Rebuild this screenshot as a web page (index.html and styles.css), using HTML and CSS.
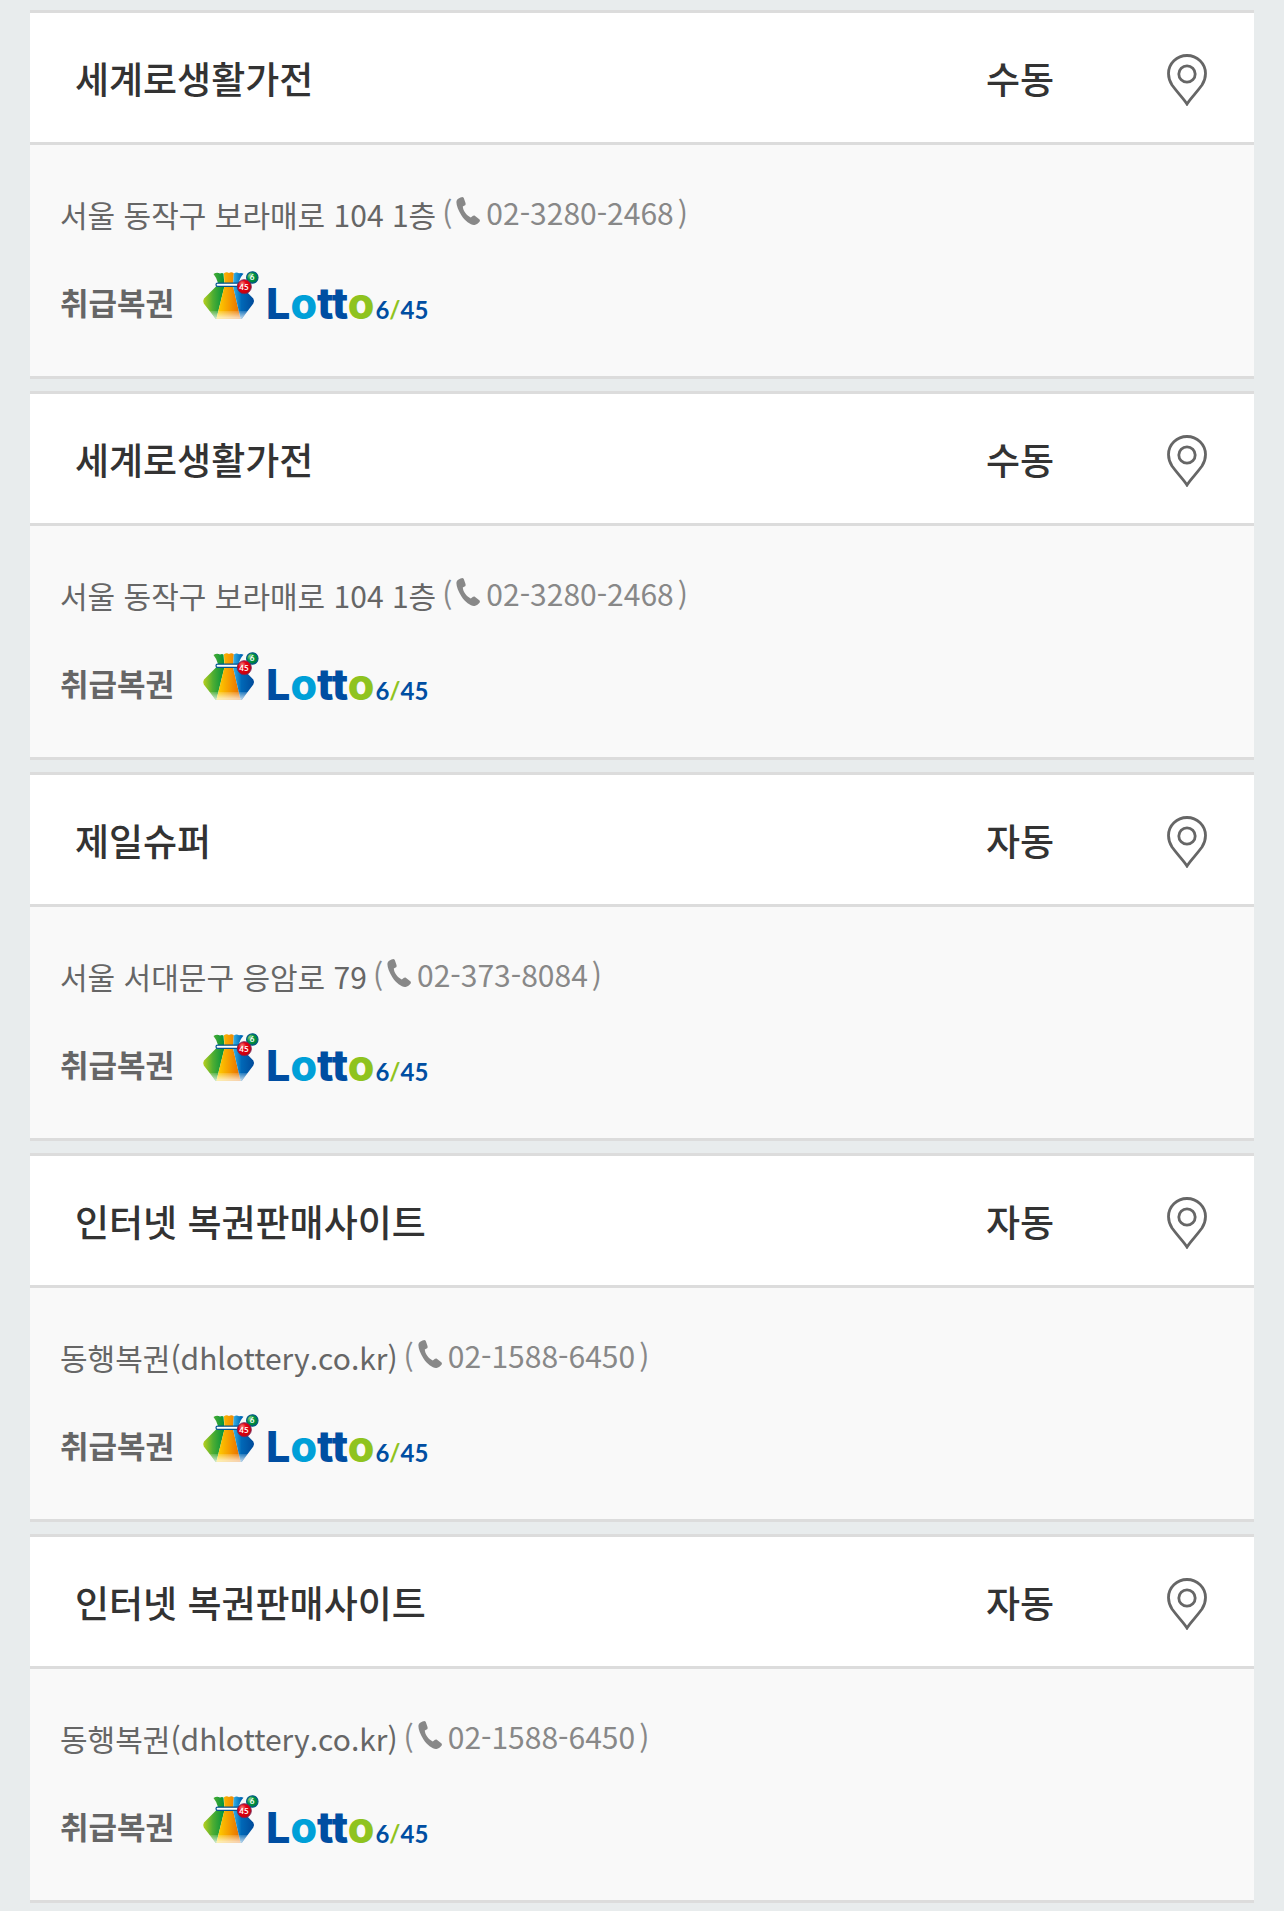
FILE: index.html
```
<!DOCTYPE html>
<html lang="ko">
<head>
  <meta charset="UTF-8">
  <meta name="viewport" content="width=device-width, initial-scale=1.0">
  <title>판매점</title>
  <link rel="stylesheet" href="styles.css">
</head>
<body>
  <!-- shared icons -->
  <svg class="sprite" aria-hidden="true">
    <defs>
      <linearGradient id="bagGreen" x1="0" x2="1">
        <stop offset="0" stop-color="#b9cf1d"/>
        <stop offset="0.45" stop-color="#4fae32"/>
        <stop offset="1" stop-color="#00923c"/>
      </linearGradient>
      <linearGradient id="bagOrange" x1="0" x2="1">
        <stop offset="0" stop-color="#ffd500"/>
        <stop offset="0.55" stop-color="#f59a00"/>
        <stop offset="1" stop-color="#e66b00"/>
      </linearGradient>
      <linearGradient id="bagBlue" x1="0" x2="1">
        <stop offset="0" stop-color="#35b4e8"/>
        <stop offset="0.4" stop-color="#0068b7"/>
        <stop offset="1" stop-color="#004a9a"/>
      </linearGradient>
      <linearGradient id="bagShine" x1="0" y1="0" x2="0" y2="1">
        <stop offset="0" stop-color="#fff" stop-opacity="0.15"/>
        <stop offset="1" stop-color="#fff" stop-opacity="0.75"/>
      </linearGradient>
      <radialGradient id="ballRed" cx="0.35" cy="0.3" r="0.7">
        <stop offset="0" stop-color="#f58a80"/>
        <stop offset="0.4" stop-color="#e50012"/>
        <stop offset="1" stop-color="#c7000b"/>
      </radialGradient>
      <radialGradient id="ballGreen" cx="0.3" cy="0.3" r="0.7">
        <stop offset="0" stop-color="#9ad07a"/>
        <stop offset="0.5" stop-color="#009944"/>
        <stop offset="1" stop-color="#007d3a"/>
      </radialGradient>
    </defs>
    <symbol id="pin" viewBox="0 0 40 52">
      <path d="M20 50 C17 45 10 38 5 31 C2.500 27 1.500 24 1.500 19.500 A18.500 18 0 0 1 38.500 19.500 C38.500 24 37.500 27 35 31 C30 38 23 45 20 50 Z" fill="none" stroke="#666" stroke-width="2.800"/>
      <circle cx="20" cy="20" r="8.200" fill="none" stroke="#666" stroke-width="2.800"/>
    </symbol>
    <symbol id="phone" viewBox="0 0 24 28">
      <path d="M4.500 .5 L6.500 0 L7.700 .8 L9.600 6.200 L9.500 8 L6.800 9.500 C7 13.500 10.500 18.500 14.800 20.500 L17 18.700 L18.500 18.500 L23.600 22.500 L24 24 C22.500 26 20.500 27.700 18.500 28 C15 28.200 9 24 5.500 18.500 C2 13 0 7.500 .5 4.200 C.8 2.500 2.500 1.200 4.500 .5 Z" fill="#888"/>
    </symbol>
    <symbol id="bag" viewBox="0 0 57 48">
      <path d="M11.500 3 Q15 .8 18 2.600 Q20 1.500 21.500 2.500 L22.500 15 L14.500 47.500 L13.500 47.500 L1.800 32.500 Q.5 30 2 27.500 L14 15.500 L16 12 Q14.500 6.500 11.500 3 Z" fill="url(#bagGreen)"/>
      <path d="M22 2.300 Q24.500 .6 27 2 Q29.500 .6 31.800 2.300 L31 15 L38.500 47.500 L14.500 47.500 L22.500 15 Z" fill="url(#bagOrange)"/>
      <path d="M31.800 2.500 Q34.500 .8 37 2.300 Q39.500 1.300 41.500 2.800 Q37.500 7 37 12 L40 16 L51.300 27.500 Q52.800 30 51.300 32.500 L40 47.500 L38.500 47.500 L31 15 Z" fill="url(#bagBlue)"/>
      <path d="M7.500 40 L46 40 L40 47.500 L13.500 47.500 Z" fill="url(#bagShine)"/>
      <rect x="14" y="12.200" width="24" height="3.200" rx="1.600" fill="#fff" stroke="#005493" stroke-width="1.200"/>
      <circle cx="50.300" cy="6.500" r="5.700" fill="url(#ballGreen)" stroke="#005b86" stroke-width="1.200"/>
      <circle cx="42.300" cy="15.700" r="7" fill="url(#ballRed)" stroke="#7b2455" stroke-width="1"/>
    </symbol>
  </svg>

  <ul class="store-list">
    <li class="store">
      <div class="store-head">
        <strong class="store-name">세계로생활가전</strong>
        <span class="store-mode">수동</span>
        <button type="button" class="map-btn" aria-label="지도"><svg class="pin"><use href="#pin"/></svg></button>
      </div>
      <div class="store-body">
        <p class="address">서울 동작구 보라매로 104 1층<span class="tel">(<a href="tel:02-3280-2468"><svg class="phone"><use href="#phone"/></svg>02-3280-2468</a>)</span></p>
        <div class="games">
          <span class="games-label">취급복권</span>
          <svg class="bag" viewBox="0 0 57 48"><use href="#bag"/><text x="50" y="9">6</text><text x="42" y="19">45</text></svg>
          <span class="lotto">L<i class="cyan">o</i>tt<i class="lime">o</i><small>6<i class="lime">/</i>45</small></span>
        </div>
      </div>
    </li>
    <li class="store">
      <div class="store-head">
        <strong class="store-name">세계로생활가전</strong>
        <span class="store-mode">수동</span>
        <button type="button" class="map-btn" aria-label="지도"><svg class="pin"><use href="#pin"/></svg></button>
      </div>
      <div class="store-body">
        <p class="address">서울 동작구 보라매로 104 1층<span class="tel">(<a href="tel:02-3280-2468"><svg class="phone"><use href="#phone"/></svg>02-3280-2468</a>)</span></p>
        <div class="games">
          <span class="games-label">취급복권</span>
          <svg class="bag" viewBox="0 0 57 48"><use href="#bag"/><text x="50" y="9">6</text><text x="42" y="19">45</text></svg>
          <span class="lotto">L<i class="cyan">o</i>tt<i class="lime">o</i><small>6<i class="lime">/</i>45</small></span>
        </div>
      </div>
    </li>
    <li class="store">
      <div class="store-head">
        <strong class="store-name">제일슈퍼</strong>
        <span class="store-mode">자동</span>
        <button type="button" class="map-btn" aria-label="지도"><svg class="pin"><use href="#pin"/></svg></button>
      </div>
      <div class="store-body">
        <p class="address">서울 서대문구 응암로 79<span class="tel">(<a href="tel:02-373-8084"><svg class="phone"><use href="#phone"/></svg>02-373-8084</a>)</span></p>
        <div class="games">
          <span class="games-label">취급복권</span>
          <svg class="bag" viewBox="0 0 57 48"><use href="#bag"/><text x="50" y="9">6</text><text x="42" y="19">45</text></svg>
          <span class="lotto">L<i class="cyan">o</i>tt<i class="lime">o</i><small>6<i class="lime">/</i>45</small></span>
        </div>
      </div>
    </li>
    <li class="store">
      <div class="store-head">
        <strong class="store-name">인터넷 복권판매사이트</strong>
        <span class="store-mode">자동</span>
        <button type="button" class="map-btn" aria-label="지도"><svg class="pin"><use href="#pin"/></svg></button>
      </div>
      <div class="store-body">
        <p class="address">동행복권(dhlottery.co.kr)<span class="tel">(<a href="tel:02-1588-6450"><svg class="phone"><use href="#phone"/></svg>02-1588-6450</a>)</span></p>
        <div class="games">
          <span class="games-label">취급복권</span>
          <svg class="bag" viewBox="0 0 57 48"><use href="#bag"/><text x="50" y="9">6</text><text x="42" y="19">45</text></svg>
          <span class="lotto">L<i class="cyan">o</i>tt<i class="lime">o</i><small>6<i class="lime">/</i>45</small></span>
        </div>
      </div>
    </li>
    <li class="store">
      <div class="store-head">
        <strong class="store-name">인터넷 복권판매사이트</strong>
        <span class="store-mode">자동</span>
        <button type="button" class="map-btn" aria-label="지도"><svg class="pin"><use href="#pin"/></svg></button>
      </div>
      <div class="store-body">
        <p class="address">동행복권(dhlottery.co.kr)<span class="tel">(<a href="tel:02-1588-6450"><svg class="phone"><use href="#phone"/></svg>02-1588-6450</a>)</span></p>
        <div class="games">
          <span class="games-label">취급복권</span>
          <svg class="bag" viewBox="0 0 57 48"><use href="#bag"/><text x="50" y="9">6</text><text x="42" y="19">45</text></svg>
          <span class="lotto">L<i class="cyan">o</i>tt<i class="lime">o</i><small>6<i class="lime">/</i>45</small></span>
        </div>
      </div>
    </li>
  </ul>
</body>
</html>
```
FILE: styles.css
```
* {
  box-sizing: border-box;
}
body {
  margin: 0;
  padding: 10px 30px 8px;
  background-color: #e8eced;
  color: #333;
  font-family: "Noto Sans CJK KR", sans-serif;
}
.sprite {
  display: block;
  width: 0;
  height: 0;
}
.store-list {
  display: flex;
  flex-direction: column;
  gap: 12px;
  margin: 0;
  padding: 0;
  list-style: none;
}
.store {
  border-top: 3px solid #dcdcdc;
  border-bottom: 3px solid #dcdcdc;
  background-color: #f9f9f9;
}

/* name, mode, map button */
.store-head {
  display: grid;
  grid-template-columns: 1fr 200px 134px;
  align-items: center;
  height: 132px;
  padding-left: 45px;
  border-bottom: 3px solid #dcdcdc;
  background-color: #fff;
  font-size: 37px;
  line-height: 56px;
}
.store-name,
.store-mode {
  font-weight: 500;
}
.store-mode {
  text-align: center;
}
.map-btn {
  justify-self: center;
  padding: 4px 0 0;
  border: none;
  background: none;
  cursor: pointer;
}
.pin {
  display: block;
  width: 40px;
  height: 52px;
}

/* address and games */
.store-body {
  padding: 45px 30px 51px;
  color: #666;
  font-size: 31px;
}
.address {
  margin: 0;
  font-size: 30px;
  line-height: 48px;
}
.tel {
  margin-left: 6px;
  line-height: 40px;
  vertical-align: 2px;
}
.tel,
.tel a {
  color: #888;
  text-decoration: none;
}
.tel a {
  margin: 0 4px;
}
.phone {
  width: 24px;
  height: 28px;
  margin-right: 6px;
}
.games {
  display: flex;
  align-items: flex-start;
  height: 54px;
  margin-top: 33px;
}
.games-label {
  padding-top: 7px;
  font-weight: 700;
  line-height: 48px;
}
.bag {
  width: 57px;
  height: 48px;
  margin: 0 7px 0 28px;
}
.bag text {
  fill: #fff;
  font-family: Lato, sans-serif;
  font-size: 8px;
  font-weight: 700;
  text-anchor: middle;
}
.lotto {
  color: #004ea2;
  font-family: Inter, sans-serif;
  font-size: 43px;
  font-weight: 800;
  line-height: 64px;
}
.lotto i {
  font-style: normal;
}
.lotto small {
  margin-left: 1px;
  font-family: Lato, sans-serif;
  font-size: 24px;
  font-weight: 700;
}
.lotto .cyan {
  color: #00a0d8;
}
.lotto .lime {
  color: #8fc31f;
}
```
